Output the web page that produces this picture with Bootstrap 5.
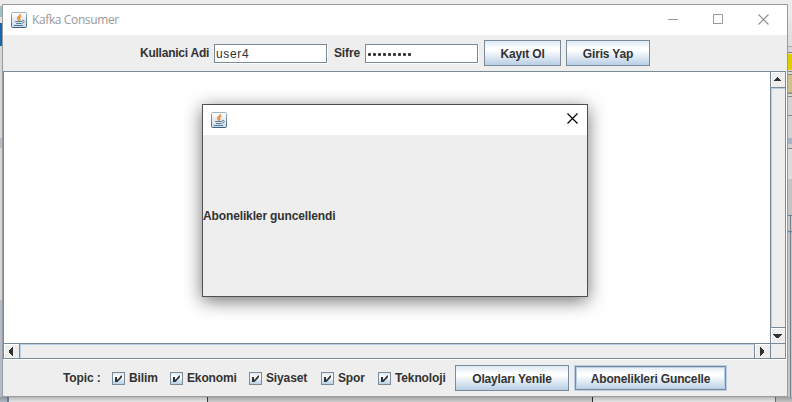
<!DOCTYPE html>
<html lang="tr">
<head>
<meta charset="utf-8">
<meta name="viewport" content="width=device-width, initial-scale=1">
<title>Kafka Consumer</title>
<link href="https://cdn.jsdelivr.net/npm/bootstrap@5.3.0/dist/css/bootstrap.min.css" rel="stylesheet">
<style>
body{width:792px;height:402px;background:#ededed;font:bold 12px/14px "Liberation Sans",Arial,sans-serif;color:#333;letter-spacing:-.13px}
.desk-left{left:0;top:0;width:2px;height:402px;background:linear-gradient(#ececec 0 6px,#9dbdca 6px 17px,#e4e4e4 17px 23px,#1767ae 23px 46px,#d5d8d5 46px 138px,#b8bcc8 138px 148px,#d5d8d5 148px 300px,#b2bccd 300px)}
.desk-right{left:788px;top:0;width:4px;height:402px;background:linear-gradient(#ececec 0 10px,#dcdcdc 46px,#a9a9a9 46px 47px,#d8d8d8 47px 52px,#858585 52px 53px,#d9d9d9 53px 54px,#ddd000 54px 70px,#d9d9d9 70px 71px,#858585 71px 72px,#d9d9d9 72px 74px,#858585 74px 75px,#cfc08c 75px 92px,#858585 93px 94px,#d9d9d9 94px 96px,#858585 96px 97px,#d4d4d4 97px 115px,#858585 115px 116px,#d4d4d4 116px 138px,#a9b3c7 138px 144px,#d0d0d0 144px 148px,#858585 148px 149px,#dcdcdc 149px 179px,#c4c4c4 179px 215px,#6f8191 215px 216px,#cacaca 216px 231px,#6f8191 231px 232px,#a9bbcd 232px 233px,#c6c6c6 233px)}
.desk-right::after{content:"";position:absolute;left:2px;top:216px;width:1px;bottom:0;background:#6f8191}
.desk-bottom{left:0;top:397px;width:792px;height:5px;background:linear-gradient(rgba(0,0,0,.28),rgba(0,0,0,.1)),linear-gradient(90deg,#c4cedd 0 7px,#7f93a8 7px 9px,#fff 9px 207px,#444 207px 208px,#e3e3e3 208px 592px,#333 592px 593px,#fff 593px 775px,#64829b 775px 776px,#dadada 776px)}
.app-win{left:2px;top:4px;width:786px;height:393px;border:1px solid #9b9b9b;background:#eee}
.title-strip{height:30px;background:#fff;flex:none}
.title-name{font:12px/16px "Open Sans","Noto Sans",sans-serif;color:#999;margin-left:5px;letter-spacing:-.38px}
.caption-btns{gap:34px;margin-right:18px;padding-bottom:1px}
.login-bar{height:36px;padding-left:137px;flex:none}
.login-bar label{white-space:nowrap}
.lbl-user{width:74px;letter-spacing:-.24px}
.lbl-pass{width:31px;margin-left:7px}
.metal-in{width:113px;height:19px;border:1px solid #7a8a99;outline:0;border-radius:0;padding:1px 1px 0;font:12px/15px "Liberation Sans",Arial,sans-serif;color:#333;letter-spacing:.65px;background:#fff;box-shadow:1px 1px #fff}
.pass-in{letter-spacing:0;padding:0 2px}
.pass-dots{gap:2px;height:100%;padding-top:3px}
.pass-dots i{width:3px;height:3px;border-radius:1px;background:#333}
.btn.metal{height:26px;padding:1px 0 0;border:1px solid #7a8a99;border-radius:0;font:bold 12px/14px "Liberation Sans",Arial,sans-serif;letter-spacing:-.15px;color:#333;background:linear-gradient(#dde8f3,#fff 32%,#fff 38%,#b8cfe5);white-space:nowrap;flex:none}
.btn.metal.focused{border:1px solid #b8cfe5;box-shadow:inset 0 0 0 1px #7a8a99,inset 0 0 0 2px #b8cfe5}
.w77{width:77px;margin-left:6px}.w84{width:84px;margin-left:5px}
.scroll-pane{display:grid;grid-template:1fr 15px/1fr 15px;height:288px;width:783px;border:1px solid #7a8a99;flex:none;box-shadow:1px 1px #fff}
.view-port{background:#fff}
.v-bar{border-left:1px solid #7a8a99}
.h-bar{border-top:1px solid #7a8a99}
.v-bar .arrow-box{height:15px;background:#eee;border-left:1px solid #fff;border-top:1px solid #fff}
.v-track{border-left:1px solid #b8cfe5;border-top:1px solid #b8cfe5;border-bottom:1px solid #7a8a99;box-shadow:0 -1px #7a8a99;margin-top:1px}
.h-bar .arrow-box{width:15px;background:#eee;border-left:1px solid #fff;border-top:1px solid #fff}
.h-track{border-left:1px solid #b8cfe5;border-top:1px solid #b8cfe5;border-right:1px solid #7a8a99;box-shadow:-1px 0 #7a8a99;margin-left:1px}
.pane-corner{border-left:1px solid #7a8a99;border-top:1px solid #7a8a99}
.topic-bar{padding:1px 0 0 60px;height:37px;flex:none}
.topic-bar>span,.topic-bar label{white-space:nowrap}
.tick-box{width:13px;height:13px;border:1px solid #7a8a99;background:linear-gradient(#dde8f3,#fff 35%,#b8cfe5);flex:none;margin-right:4px}
.tick-box svg{display:block}
.t0{width:49px}.t1{width:58px}.t2{width:79px}.t3{width:72px}.t4{width:57px}.t5{width:77px}
.msg-win{left:202px;top:104px;width:386px;height:193px;border:1px solid #505050;background:#eee;box-shadow:0 4px 17px rgba(0,0,0,.55)}
svg{flex:none}
</style>
</head>
<body class="position-relative overflow-hidden m-0">
<svg width="0" height="0" class="position-absolute">
  <defs>
    <linearGradient id="cupbg" x2="0" y2="1"><stop stop-color="#fff"/><stop offset="1" stop-color="#ccd8e1"/></linearGradient>
    <linearGradient id="cupedge" x2="0" y2="1"><stop stop-color="#9cb3c3"/><stop offset="1" stop-color="#3d627f"/></linearGradient>
    <symbol id="java" viewBox="0 0 16 16">
      <rect x=".5" y=".5" width="15" height="15" rx="1" fill="url(#cupbg)" stroke="url(#cupedge)"/>
      <path d="M9.600 2c.3 1.700-3.200 2.200-3 4.300.1.900.8 1.500 1.300 2.200M10.400 4.600C8.800 5 7.900 5.800 8.500 6.600c.6.700.4 1.400-.2 1.900" fill="none" stroke="#e8882f" stroke-width="1.300"/>
      <path d="M4.200 9.500h7M5 11.500h5.500M3 13.500h9" stroke="#547b9c" stroke-width="1.200" fill="none"/>
      <path d="M11 8.500c3-.8 2.800 2.100.2 2.700" stroke="#547b9c" fill="none"/>
    </symbol>
    <symbol id="tick" viewBox="0 0 11 11"><path d="M2 4h2v2.500h.8L8 2.500h1v1.700L4.600 9H2z" fill="#333"/></symbol>
  </defs>
</svg>
<div class="desk-left position-absolute"></div>
<div class="desk-right position-absolute"></div>
<div class="desk-bottom position-absolute"></div>

<main class="app-win position-absolute d-flex flex-column">
  <header class="title-strip d-flex align-items-center ps-2">
    <svg width="16" height="16"><use href="#java"/></svg>
    <span class="title-name">Kafka Consumer</span>
    <div class="caption-btns d-flex ms-auto" aria-hidden="true">
      <svg width="11" height="11"><path d="M0 5.500h10" stroke="#999"/></svg>
      <svg width="11" height="11"><path d="M.5.500h9v9h-9z" stroke="#999" fill="none"/></svg>
      <svg width="11" height="11"><path d="M.5.500l10 10M10.500.500l-10 10" stroke="#8c8c8c" stroke-width="1.100"/></svg>
    </div>
  </header>
  <form class="login-bar d-flex align-items-center">
    <label class="lbl-user">Kullanici Adi</label>
    <input class="metal-in" type="text" value="user4">
    <label class="lbl-pass">Sifre</label>
    <div class="metal-in pass-in"><div class="pass-dots d-flex align-items-center"><i></i><i></i><i></i><i></i><i></i><i></i><i></i><i></i><i></i></div></div>
    <button type="button" class="btn metal w77">Kayıt Ol</button>
    <button type="button" class="btn metal w84">Giris Yap</button>
  </form>
  <section class="scroll-pane">
    <div class="view-port"></div>
    <div class="v-bar d-flex flex-column">
      <div class="arrow-box d-flex"><svg width="13" height="14" shape-rendering="crispEdges"><path d="M5 4h1v1h1v1h1v1h1v1H2V7h1V6h1V5h1z" fill="#333"/></svg></div>
      <div class="v-track flex-grow-1"></div>
      <div class="arrow-box d-flex"><svg width="13" height="14" shape-rendering="crispEdges"><path d="M1 5h9v1H9v1H8v1H7v1H4V8H3V7H2V6H1z" fill="#333"/></svg></div>
    </div>
    <div class="h-bar d-flex">
      <div class="arrow-box"><svg class="d-block" width="14" height="13" shape-rendering="crispEdges"><path d="M8 2v9H7v-1H6V9H5V8H4V5h1V4h1V3h1V2z" fill="#333"/></svg></div>
      <div class="h-track flex-grow-1"></div>
      <div class="arrow-box"><svg class="d-block" width="14" height="13" shape-rendering="crispEdges"><path d="M4 2v9h1v-1h1V9h1V8h1V5H7V4H6V3H5V2z" fill="#333"/></svg></div>
    </div>
    <div class="pane-corner"></div>
  </section>
  <footer class="topic-bar d-flex align-items-center">
    <span class="t0">Topic :</span>
    <label class="t1 d-flex align-items-center"><span class="tick-box"><svg width="11" height="11"><use href="#tick"/></svg></span>Bilim</label>
    <label class="t2 d-flex align-items-center"><span class="tick-box"><svg width="11" height="11"><use href="#tick"/></svg></span>Ekonomi</label>
    <label class="t3 d-flex align-items-center"><span class="tick-box"><svg width="11" height="11"><use href="#tick"/></svg></span>Siyaset</label>
    <label class="t4 d-flex align-items-center"><span class="tick-box"><svg width="11" height="11"><use href="#tick"/></svg></span>Spor</label>
    <label class="t5 d-flex align-items-center"><span class="tick-box"><svg width="11" height="11"><use href="#tick"/></svg></span>Teknoloji</label>
    <button type="button" class="btn metal" style="width:114px">Olayları Yenile</button>
    <button type="button" class="btn metal focused" style="width:153px;margin-left:5px">Abonelikleri Guncelle</button>
  </footer>
</main>

<div class="msg-win position-absolute d-flex flex-column" role="dialog">
  <div class="title-strip d-flex align-items-center ps-2 pb-1">
    <svg class="mt-1" width="16" height="16"><use href="#java"/></svg>
    <svg class="ms-auto me-2" width="12" height="11"><path d="M.5.500l10 10M10.500.500l-10 10" stroke="#000" stroke-width="1.200"/></svg>
  </div>
  <div class="flex-grow-1 d-flex align-items-center">Abonelikler guncellendi</div>
</div>
<script src="https://cdn.jsdelivr.net/npm/bootstrap@5.3.0/dist/js/bootstrap.bundle.min.js"></script>
</body>
</html>
